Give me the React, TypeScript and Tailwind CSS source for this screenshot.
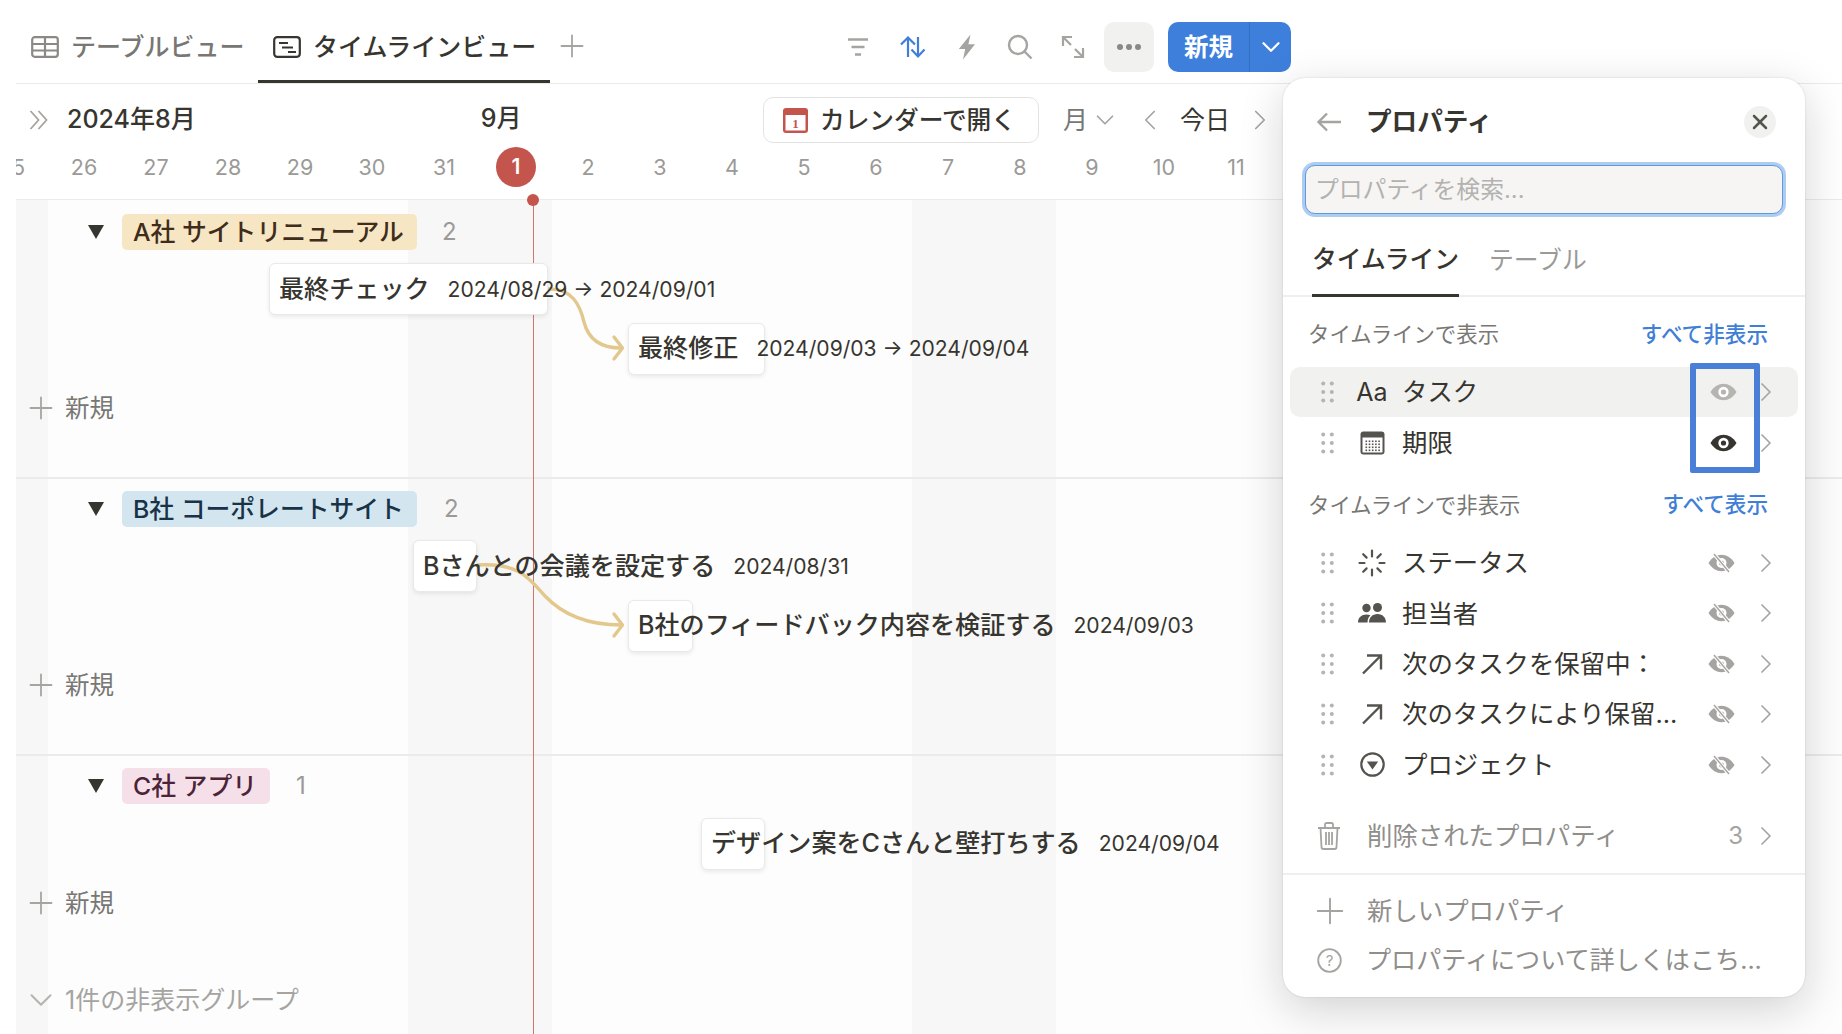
import React from 'react';
import { ChevronDown, ChevronLeft, ChevronRight, Plus, X } from 'lucide-react';

const FONT = "font-['Inter','Noto_Sans_CJK_JP',sans-serif]";

const days = ['25', '26', '27', '28', '29', '30', '31', '1', '2', '3', '4', '5', '6', '7', '8', '9', '10', '11'];

const TableIcon = () => (
  <svg width="28" height="22" viewBox="0 0 28 22" fill="none" stroke="#8a8985" strokeWidth="2.2">
    <rect x="1.2" y="1.2" width="25.6" height="19.6" rx="2.5" />
    <path d="M1 8h26M1 14.5h26M14 1.5v19" />
  </svg>
);

const TimelineIcon = () => (
  <svg width="28" height="22" viewBox="0 0 28 22" fill="none" stroke="#37352f" strokeWidth="2.2">
    <rect x="1.2" y="1.2" width="25.6" height="19.6" rx="3" />
    <path d="M6 7h9M9 11.5h11M15 16h8" />
  </svg>
);

const FilterIcon = () => (
  <svg width="24" height="20" viewBox="0 0 24 20" fill="none" stroke="#a5a4a1" strokeWidth="2.4">
    <path d="M2 2.5h20M5.5 10h13M9 17.5h6" />
  </svg>
);

const SortIcon = () => (
  <svg width="28" height="24" viewBox="0 0 28 24" fill="none" stroke="#3f7fd7" strokeWidth="2.2">
    <path d="M9 22V2.5M2 9.5l7-7 7 7M19 2v19.5M12.5 14.5l6.5 7 6.5-7" />
  </svg>
);

const BoltIcon = () => (
  <svg width="18" height="26" viewBox="0 0 18 26" fill="#a5a4a1">
    <path d="M12.5 0.5 0.8 15h6.4L5 25.5 17 10.2h-6.6z" />
  </svg>
);

const SearchIcon = () => (
  <svg width="26" height="26" viewBox="0 0 26 26" fill="none" stroke="#a5a4a1" strokeWidth="2.4">
    <circle cx="11" cy="11" r="9" />
    <path d="M17.5 17.5 24.5 24.5" />
  </svg>
);

const ExpandIcon = () => (
  <svg width="24" height="24" viewBox="0 0 24 24" fill="none" stroke="#a5a4a1" strokeWidth="2.2">
    <path d="M2 11V2h9M2.5 2.5l7.5 7.5M22 13v9h-9M21.5 21.5 14 14" />
  </svg>
);

const CalendarAppIcon = () => (
  <svg width="25" height="25" viewBox="0 0 25 25">
    <rect width="25" height="25" rx="3" fill="#c4554d" />
    <rect x="2.5" y="7" width="20" height="15.5" fill="#fff" />
    <text x="12.5" y="20" textAnchor="middle" fontSize="13" fontWeight="700" fontFamily="Liberation Serif, serif" fill="#c4554d">
      1
    </text>
  </svg>
);

const DoubleChevron = () => (
  <svg width="20" height="22" viewBox="0 0 20 22" fill="none" stroke="#a5a4a1" strokeWidth="1.8">
    <path d="M1.5 2 9.5 11 1.5 20M9.5 2 17.5 11 9.5 20" />
  </svg>
);

const BackArrow = () => (
  <svg width="26" height="20" viewBox="0 0 26 20" fill="none" stroke="#a5a4a1" strokeWidth="2.400">
    <path d="M25 10H2.500M11 1.500 2.500 10l8.500 8.500" />
  </svg>
);

const Triangle = () => (
  <svg width="16" height="14" viewBox="0 0 16 14" fill="#37352f">
    <path d="M0 0h16L8 14z" />
  </svg>
);

const DragDots = () => (
  <svg width="13" height="22" viewBox="0 0 13 22" fill="#b5b4b1">
    <circle cx="2.2" cy="2.5" r="2" />
    <circle cx="10.8" cy="2.5" r="2" />
    <circle cx="2.2" cy="11" r="2" />
    <circle cx="10.8" cy="11" r="2" />
    <circle cx="2.2" cy="19.5" r="2" />
    <circle cx="10.8" cy="19.5" r="2" />
  </svg>
);

const Eye = ({ color }: { color: string }) => (
  <svg className="ml-[2px]" width="27" height="18" viewBox="0 0 27 18">
    <path d="M0.5 9C4 3.5 8.500 0.8 13.500 0.8S23 3.500 26.500 9C23 14.500 18.500 17.200 13.500 17.200S4 14.500 0.500 9Z" fill={color} />
    <circle cx="13.500" cy="9" r="5.200" fill="#fff" />
    <circle cx="13.500" cy="9" r="2.600" fill={color} />
  </svg>
);

const EyeOff = () => (
  <svg className="-ml-[1px]" width="27" height="20" viewBox="0 0 27 20">
    <path d="M0.500 10C4 4.500 8.500 1.800 13.500 1.800S23 4.500 26.500 10C23 15.500 18.500 18.200 13.500 18.200S4 15.500 0.500 10Z" fill="#a5a4a1" />
    <circle cx="13.500" cy="10" r="5" fill="#fff" />
    <circle cx="13.500" cy="10" r="2.500" fill="#a5a4a1" />
    <path d="M6 1 21 19" stroke="#fff" strokeWidth="3.600" />
    <path d="M6 1 21 19" stroke="#a5a4a1" strokeWidth="1.400" />
  </svg>
);

const AaIcon = () => <span className="text-[25px] leading-none text-[#37352f]">Aa</span>;

const DateIcon = () => (
  <svg width="25" height="24" viewBox="0 0 25 24">
    <rect x="0.500" y="0.500" width="24" height="23" rx="3" fill="#55534e" />
    <rect x="2.500" y="6.500" width="20" height="15" fill="#fff" />
    <g fill="#55534e">
      {[9.500, 12.500, 15.500, 18.500].map((y) =>
        [5.500, 8.700, 11.900, 15.100, 18.300].map((x) => <rect key={`${x}-${y}`} x={x} y={y} width="1.600" height="1.600" />),
      )}
    </g>
  </svg>
);

const StatusIcon = () => (
  <svg width="28" height="28" viewBox="0 0 28 28" fill="none" stroke="#55534e" strokeWidth="2.200" strokeLinecap="round">
    <path d="M14 1.500v6M14 20.500v6M1.500 14h5M21.500 14h5M5.200 5.200l3.400 3.400M19.400 19.400l3.400 3.400M5.200 22.800l3.400-3.400M19.400 8.600l3.400-3.400" />
  </svg>
);

const PeopleIcon = () => (
  <svg width="28" height="20" viewBox="0 0 28 20" fill="#55534e">
    <circle cx="8.500" cy="5" r="4.200" />
    <circle cx="19.500" cy="4.500" r="4.500" />
    <path d="M0 19.500c0-5 3.500-8 8.500-8 1.500 0 2.800.3 4 .8-2 1.700-3 4-3 7.200zM11 19.500c0-5 3.500-8.500 8.500-8.500s8.500 3.500 8.500 8.500z" />
  </svg>
);

const RelationIcon = () => (
  <svg width="22" height="22" viewBox="0 0 22 22" fill="none" stroke="#55534e" strokeWidth="2.400">
    <path d="M2 20.500 19.500 3M6 2.500h14v14" />
  </svg>
);

const SelectIcon = () => (
  <svg width="25" height="25" viewBox="0 0 25 25" fill="none">
    <circle cx="12.500" cy="12.500" r="11.200" stroke="#55534e" strokeWidth="2.200" />
    <path d="M6.800 9.500h11.400L12.500 17.500z" fill="#55534e" />
  </svg>
);

const TrashIcon = () => (
  <svg width="24" height="28" viewBox="0 0 24 28" fill="none" stroke="#a5a4a1" strokeWidth="1.800">
    <path d="M1 6h22M8 5.500V2.500c0-.8.700-1.500 1.500-1.500h5c.8 0 1.500.7 1.500 1.500v3M3.500 6l1 19c0 1 1 2 2 2h11c1 0 2-1 2-2l1-19M9 10v13M12 10v13M15 10v13" />
  </svg>
);

const HelpIcon = () => (
  <svg width="25" height="25" viewBox="0 0 25 25" fill="none">
    <circle cx="12.500" cy="12.500" r="11.300" stroke="#a5a4a1" strokeWidth="1.800" />
    <text x="12.500" y="18" textAnchor="middle" fontSize="15" fontFamily="Inter, sans-serif" fill="#a5a4a1">
      ?
    </text>
  </svg>
);

const ViewTab = ({ icon, label, active }: { icon: React.ReactNode; label: string; active?: boolean }) => (
  <div
    className={`flex h-full items-center gap-[12px] pl-[15px] pr-[13.500px] pt-[3px] border-b-[3px] -mb-[1px] ${
      active ? 'border-[#37352f] text-[#37352f]' : 'border-transparent text-[#787774]'
    }`}
  >
    {icon}
    <span className="text-[25px] font-medium leading-none">{label}</span>
  </div>
);

const GroupTag = ({ label, bg, color, count, countGap }: { label: string; bg: string; color: string; count: string; countGap: string }) => (
  <div className="flex h-[36px] items-center pl-[72px]">
    <Triangle />
    <span className={`ml-[18px] flex h-[36px] items-center rounded-[5px] pl-[11px] pr-[13px] text-[24.800px] font-medium leading-none whitespace-nowrap ${bg} ${color}`}>
      {label}
    </span>
    <span className={`${countGap} text-[24px] text-[#9b9a97] leading-none`}>{count}</span>
  </div>
);

const NewRow = ({ className }: { className: string }) => (
  <div className={`absolute left-[10px] flex items-center text-[#787774] ${className}`}>
    <div className="flex w-[30px] justify-center">
      <Plus className="shrink-0" size={36} strokeWidth={1.200} color="#a5a4a1" />
    </div>
    <span className="ml-[9px] text-[24.500px] leading-none">新規</span>
  </div>
);

const Card = ({ title, date, className }: { title: string; date: string; className: string }) => (
  <div className={`absolute z-10 flex h-[52px] items-center rounded-[6px] border border-[#e9e9e7] bg-white pl-[9px] whitespace-nowrap shadow-[0_2px_4px_rgba(15,15,15,0.08)] ${className}`}>
    <span className="text-[25.100px] font-medium leading-none text-[#37352f]">{title}</span>
    <span className="ml-[18px] text-[21.100px] leading-none text-[#37352f]">{date}</span>
  </div>
);

const RowChevron = () => (
  <div className="ml-[14px] flex w-[28px] items-center justify-center">
    <ChevronRight className="ml-[2px] shrink-0" size={32} strokeWidth={1.300} color="#a5a4a1" />
  </div>
);

const PropRow = ({ icon, label, eye, hover }: { icon: React.ReactNode; label: string; eye: React.ReactNode; hover?: boolean }) => (
  <div className={`mx-[7px] flex h-[50.400px] items-center rounded-[10px] pl-[31px] pr-[19px] ${hover ? 'bg-[#f1f1f0]' : ''}`}>
    <DragDots />
    <div className="ml-[23px] flex w-[30px] items-center justify-center">{icon}</div>
    <span className="ml-[15px] flex-1 text-[25.400px] leading-none text-[#37352f] whitespace-nowrap">{label}</span>
    <div className="flex w-[30px] items-center justify-center">{eye}</div>
    <RowChevron />
  </div>
);

const SectionHeader = ({ title, action, className }: { title: string; action: string; className: string }) => (
  <div className={`flex items-center justify-between pl-[25px] pr-[37px] ${className}`}>
    <span className="text-[21.400px] text-[#787774] leading-none">{title}</span>
    <span className="text-[21.600px] font-medium text-[#3f7fd7] leading-none">{action}</span>
  </div>
);

const PropertiesPanel = () => (
  <div className="absolute left-[1283px] top-[78px] z-30 flex h-[919px] w-[522px] flex-col rounded-[22px] bg-white shadow-[0_0_2px_rgba(15,15,15,0.15),0_12px_44px_rgba(15,15,15,0.18)]">
    <div className="flex h-[87px] shrink-0 items-center pl-[33px] pr-[29px]">
      <BackArrow />
      <span className="ml-[24px] flex-1 text-[25.600px] font-bold text-[#37352f] leading-none">プロパティ</span>
      <div className="flex h-[32px] w-[32px] items-center justify-center rounded-full bg-[#f1f1f0]">
        <X className="shrink-0" size={24} strokeWidth={2.500} color="#55534e" />
      </div>
    </div>
    <div className="mx-[22px] flex h-[49px] shrink-0 items-center rounded-[10px] border-[1.500px] border-[#5e9ae0] bg-[#f6f5f4] pl-[9px] shadow-[0_0_0_3px_rgba(94,154,224,0.5)]">
      <span className="text-[23.800px] leading-none text-[#b3b2af]">プロパティを検索...</span>
    </div>
    <div className="flex h-[83px] shrink-0 gap-[30px] border-b-2 border-[#efefee] px-[29px]">
      <div className="flex h-[83px] w-[147px] items-center justify-center border-b-[3px] border-[#37352f] pt-[10px] text-[24.800px] font-medium leading-none text-[#37352f] whitespace-nowrap">
        タイムライン
      </div>
      <div className="flex h-[83px] items-center pt-[10px] text-[24.800px] leading-none text-[#9b9a97]">テーブル</div>
    </div>
    <SectionHeader title="タイムラインで表示" action="すべて非表示" className="h-[70px] pt-[5px] shrink-0" />
    <PropRow hover icon={<AaIcon />} label="タスク" eye={<Eye color="#b5b4b1" />} />
    <PropRow icon={<DateIcon />} label="期限" eye={<Eye color="#37352f" />} />
    <SectionHeader title="タイムラインで非表示" action="すべて表示" className="h-[70px] pt-[5px] shrink-0" />
    <PropRow icon={<StatusIcon />} label="ステータス" eye={<EyeOff />} />
    <PropRow icon={<PeopleIcon />} label="担当者" eye={<EyeOff />} />
    <PropRow icon={<RelationIcon />} label="次のタスクを保留中：" eye={<EyeOff />} />
    <PropRow icon={<RelationIcon />} label="次のタスクにより保留..." eye={<EyeOff />} />
    <PropRow icon={<SelectIcon />} label="プロジェクト" eye={<EyeOff />} />
    <div className="mx-[7px] mt-[21px] flex h-[50px] items-center pl-[27px] pr-[19px] text-[#8f8e8b]">
      <div className="flex w-[24px] justify-center"><TrashIcon /></div>
      <span className="ml-[26px] flex-1 text-[25.400px] leading-none">削除されたプロパティ</span>
      <span className="translate-x-[6px] text-[24px] text-[#a5a4a1] leading-none">3</span>
      <RowChevron />
    </div>
    <div className="mt-[12px] border-t-2 border-[#efefee]" />
    <div className="mt-[11px] flex h-[50px] items-center pl-[29px] text-[#8f8e8b]">
      <div className="flex w-[36px] justify-center">
        <Plus className="shrink-0" size={42} strokeWidth={1.100} color="#a5a4a1" />
      </div>
      <span className="ml-[19px] text-[25.400px] leading-none">新しいプロパティ</span>
    </div>
    <div className="flex h-[50px] items-center pl-[34px] text-[#8f8e8b]">
      <HelpIcon />
      <span className="ml-[24px] text-[25.100px] leading-none whitespace-nowrap">プロパティについて詳しくはこち...</span>
    </div>
    <div className="absolute left-[407px] top-[285px] h-[110px] w-[70px] rounded-[2px] border-[6px] border-[#4a7fd7]" />
  </div>
);

export default function App() {
  return (
    <div className={`relative h-[1034px] w-[1842px] overflow-hidden bg-white ${FONT}`}>
      {/* view tabs + toolbar */}
      <div className="ml-4 flex h-[84px] items-stretch border-b border-[#ebebea] pt-[11px] pr-[551px]">
        <ViewTab icon={<TableIcon />} label="テーブルビュー" />
        <ViewTab active icon={<TimelineIcon />} label="タイムラインビュー" />
        <div className="ml-[4px] flex items-center pb-[2px]">
          <Plus className="shrink-0" size={36} strokeWidth={1.200} color="#a5a4a1" />
        </div>
        <div className="ml-auto flex items-center">
          <div className="flex w-[55px] justify-center"><FilterIcon /></div>
          <div className="flex w-[55px] justify-center"><SortIcon /></div>
          <div className="flex w-[53px] justify-center"><BoltIcon /></div>
          <div className="flex w-[53px] justify-center"><SearchIcon /></div>
          <div className="mr-[4px] flex w-[54px] justify-center"><ExpandIcon /></div>
          <div className="flex h-[50px] w-[50px] items-center justify-center gap-[3px] rounded-[10px] bg-[#f1f1f0]">
            <span className="h-[6px] w-[6px] rounded-full bg-[#8a8985]" />
            <span className="h-[6px] w-[6px] rounded-full bg-[#8a8985]" />
            <span className="h-[6px] w-[6px] rounded-full bg-[#8a8985]" />
          </div>
          <div className="ml-[14px] flex h-[50px] w-[123px] items-center rounded-[10px] bg-[#3e7fdb] text-white">
            <span className="flex w-[81px] justify-center text-[24.500px] font-bold leading-none">新規</span>
            <span className="flex h-full flex-1 items-center justify-center border-l border-[#356fc2]">
              <ChevronDown className="shrink-0" size={30} strokeWidth={1.800} />
            </span>
          </div>
        </div>
      </div>

      {/* month row */}
      <div className="ml-4 flex h-[58px] items-center pt-[14px] pr-[565px]">
        <div className="ml-[13px] flex w-[20px]"><DoubleChevron /></div>
        <span className="mb-[2px] ml-[18px] text-[25px] font-medium leading-none text-[#37352f]">2024年8月</span>
        <span className="mb-[4px] ml-[285px] text-[25px] font-medium leading-none text-[#37352f]">9月</span>
        <div className="ml-auto flex h-[46px] w-[276px] shrink-0 items-center rounded-[10px] border border-[#e3e3e2] pl-[19px]">
          <CalendarAppIcon />
          <span className="ml-[12px] text-[24.700px] font-medium leading-none text-[#37352f] whitespace-nowrap">カレンダーで開く</span>
        </div>
        <span className="ml-[24px] text-[25px] leading-none text-[#787774]">月</span>
        <ChevronDown className="ml-[2px] shrink-0" size={30} strokeWidth={1.400} color="#a5a4a1" />
        <ChevronLeft className="ml-[13px] shrink-0" size={34} strokeWidth={1.200} color="#a5a4a1" />
        <span className="ml-[13px] text-[25px] leading-none text-[#37352f]">今日</span>
        <ChevronRight className="ml-[13px] shrink-0" size={34} strokeWidth={1.200} color="#a5a4a1" />
      </div>

      {/* day numbers */}
      <div className="relative ml-4 flex h-[58px] items-start overflow-hidden border-b border-[#ebebea] pt-[5px]">
        <div className="-ml-[40px] flex pr-[24px]">
          {days.map((d) => (
            <div key={d} className="relative flex h-[40px] w-[72px] shrink-0 items-center justify-center">
              {d === '1' ? (
                <span className="flex h-[40px] w-[40px] items-center justify-center rounded-full bg-[#c4554d] text-[21px] font-semibold text-white">1</span>
              ) : (
                <span className="text-[21.500px] text-[#9b9a97]">{d}</span>
              )}
            </div>
          ))}
        </div>
      </div>

      {/* timeline body */}
      <div className="relative ml-4 h-[834px] bg-[#fdfdfd]">
        <div className="absolute left-0 top-0 h-full w-[32px] bg-[#f7f7f7]" />
        <div className="absolute left-[392px] top-0 h-full w-[144px] bg-[#f7f7f7]" />
        <div className="absolute left-[896px] top-0 h-full w-[144px] bg-[#f7f7f7]" />

        {/* dependency arrows */}
        <svg className="absolute left-0 top-0 z-[5] overflow-visible" width="1600" height="834" viewBox="16 200 1600 834" fill="none" stroke="#e2c88d" strokeWidth="3.400" strokeLinecap="round" strokeLinejoin="round">
          <path d="M548 289C572 288 580 305 584 322C588 338 600 348 621 348" />
          <path d="M614 337 622.500 348 614 359" />
          <path d="M477 565C520 562 530 580 545 596C562 614 585 625 621 625" />
          <path d="M614 614 622.500 625 614 636" />
        </svg>

        <div className="relative h-[279px] border-b-2 border-[#ebebea] pt-[14px]">
          <GroupTag label="A社 サイトリニューアル" bg="bg-[#f6e6c3]" color="text-[#402c1b]" count="2" countGap="ml-[25px]" />
          <Card title="最終チェック" date="2024/08/29 → 2024/09/01" className="left-[253px] top-[63px] w-[279px] pt-[2px]" />
          <Card title="最終修正" date="2024/09/03 → 2024/09/04" className="left-[612px] top-[123px] w-[137px]" />
          <NewRow className="top-[190px]" />
        </div>
        <div className="relative h-[277px] border-b-2 border-[#ebebea] pt-[12px]">
          <GroupTag label="B社 コーポレートサイト" bg="bg-[#d3e5ef]" color="text-[#183347]" count="2" countGap="ml-[27px]" />
          <Card title="Bさんとの会議を設定する" date="2024/08/31" className="left-[397px] top-[61px] w-[64px] pt-[2px]" />
          <Card title="B社のフィードバック内容を検証する" date="2024/09/03" className="left-[612px] top-[121px] w-[65px]" />
          <NewRow className="top-[188px]" />
        </div>
        <div className="relative h-[278px] pt-[12px]">
          <GroupTag label="C社 アプリ" bg="bg-[#f5e0e9]" color="text-[#4c2337]" count="1" countGap="ml-[26px]" />
          <Card title="デザイン案をCさんと壁打ちする" date="2024/09/04" className="left-[685px] top-[62px] w-[64px]" />
          <NewRow className="top-[129px]" />
          <div className="absolute left-[10px] top-[225px] flex items-center text-[#a5a4a1]">
            <div className="flex w-[30px] justify-center">
              <ChevronDown className="shrink-0" size={38} strokeWidth={1.300} color="#b5b4b1" />
            </div>
            <span className="ml-[9px] text-[25px] leading-none whitespace-nowrap">1件の非表示グループ</span>
          </div>
        </div>

        {/* today marker */}
        <div className="absolute left-[517px] top-0 h-full w-px bg-[#d0766f]" />
        <div className="absolute left-[511px] -top-[6px] h-[12px] w-[12px] rounded-full bg-[#c4554d]" />
      </div>

      <PropertiesPanel />
    </div>
  );
}
